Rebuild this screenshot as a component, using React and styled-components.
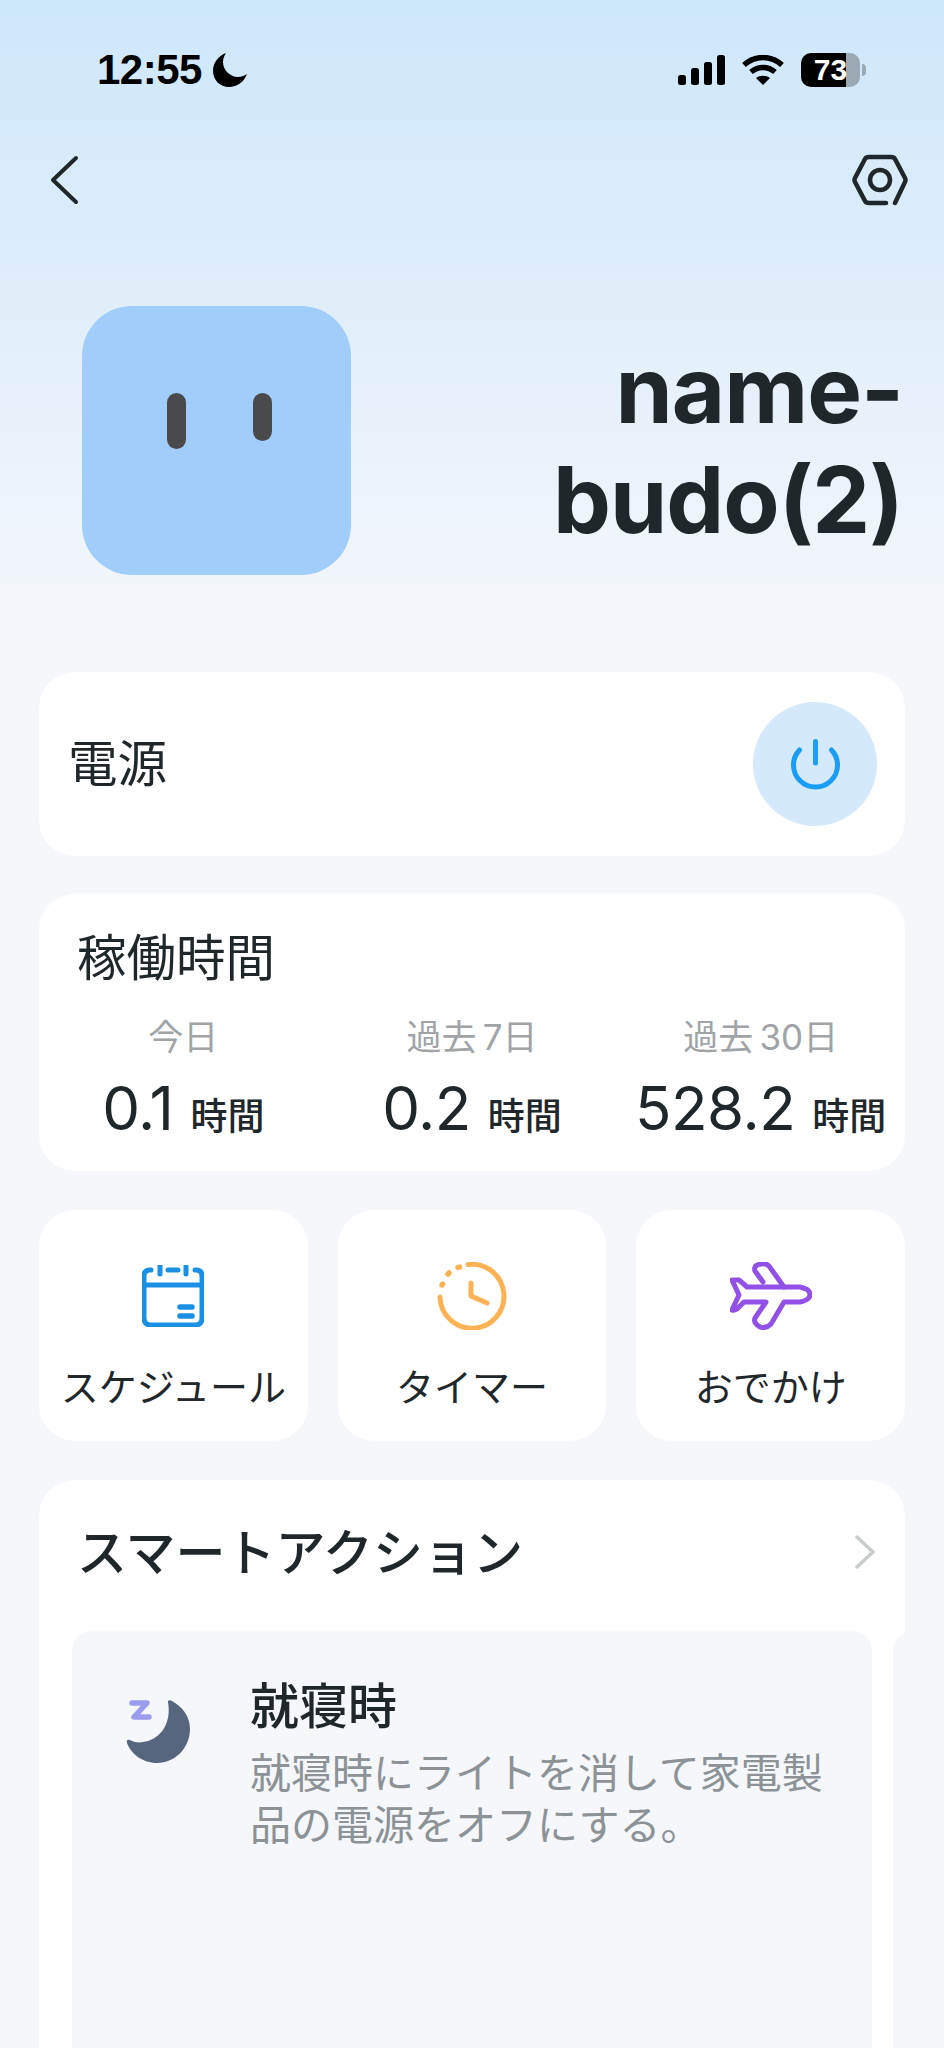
import styled, { createGlobalStyle } from "styled-components";

const GlobalStyle = createGlobalStyle`
    html, body {
        margin: 0;
        padding: 0;
        background: #f5f7fb;
    }
    * {
        box-sizing: border-box;
    }
`

const Page = styled.div`
    width: 944px;
    height: 2048px;
    overflow: hidden;
    padding: 0 39px;
    background: linear-gradient(180deg, #cde7fb 0%, #dfeefa 280px, #f5f7fb 640px);
    font-family: Inter, "Noto Sans CJK JP", sans-serif;
    color: #1f272b;
`

const StatusBar = styled.div`
    display: flex;
    align-items: center;
    justify-content: space-between;
    height: 34px;
    margin: 53px -39px 0;
    padding: 0 78px 0 97px;
`

const StatusGroup = styled.div`
    display: flex;
    align-items: center;
    gap: ${(props) => props.$gap || 0}px;
`

const Time = styled.span`
    font-family: "Liberation Sans", sans-serif;
    font-size: 42px;
    font-weight: 700;
    line-height: 34px;
    color: #000;
    letter-spacing: -0.5px;
`

const Battery = styled.div`
    position: relative;
    width: 59px;
    height: 34px;
    border-radius: 10px;
    overflow: hidden;
    background: linear-gradient(90deg, #000 0, #000 45px, #9aa9b4 45px);
    color: #fff;
    font-family: "Liberation Sans", sans-serif;
    font-size: 30px;
    font-weight: 700;
    line-height: 34px;
    text-align: center;
`

const BatteryNub = styled.div`
    width: 4px;
    height: 12px;
    margin-left: 2px;
    border-radius: 0 4px 4px 0;
    background: #9aa9b4;
`

const NavBar = styled.div`
    display: flex;
    align-items: center;
    justify-content: space-between;
    height: 52px;
    margin: 67px -3px 0 10px;
`

const Hero = styled.div`
    display: flex;
    align-items: center;
    justify-content: space-between;
    margin-top: 100px;
    padding: 0 2px 0 43px;
`

const Avatar = styled.div`
    display: flex;
    justify-content: center;
    gap: 67px;
    flex: none;
    width: 269px;
    height: 269px;
    padding: 87px 0 0 6px;
    border-radius: 50px;
    background: #a1cdfb;
`

const Eye = styled.div`
    width: 19px;
    height: ${(props) => props.$height}px;
    border-radius: 10px;
    background: #4a4a4c;
`

const DeviceName = styled.h1`
    width: 500px;
    margin: 0;
    padding-top: 8px;
    font-size: 92px;
    font-weight: 700;
    line-height: 110px;
    letter-spacing: -1px;
    text-align: right;
    color: #1f272b;
`

const Card = styled.section`
    background: #fff;
    border-radius: 36px;
`

const PowerCard = styled(Card)`
    display: flex;
    align-items: center;
    justify-content: space-between;
    height: 184px;
    margin-top: 97px;
    padding: 0 28px 0 29px;
`

const CardLabel = styled.div`
    font-size: 49.5px;
    line-height: 60px;
    font-weight: 400;
`

const PowerButton = styled.div`
    display: flex;
    align-items: center;
    justify-content: center;
    width: 124px;
    height: 124px;
    border-radius: 50%;
    background: #d5e9fd;
`

const UptimeCard = styled(Card)`
    height: 277px;
    margin-top: 38px;
    padding-top: 34px;
`

const UptimeTitle = styled(CardLabel)`
    padding-left: 38px;
`

const StatsRow = styled.div`
    display: grid;
    grid-template-columns: repeat(3, 1fr);
    margin-top: 27px;
`

const Stat = styled.div`
    display: flex;
    flex-direction: column;
    align-items: center;
`

const StatLabel = styled.div`
    font-size: 35px;
    line-height: 44px;
    color: #a0a4a7;
`

const StatValue = styled.div`
    margin-top: 14px;
    font-size: 60px;
    line-height: 70px;
    letter-spacing: -0.5px;
    white-space: nowrap;
`

const StatUnit = styled.span`
    margin-left: 17px;
    font-size: 37px;
    font-weight: 500;
    letter-spacing: 0;
`

const ActionRow = styled.div`
    display: grid;
    grid-template-columns: repeat(3, 1fr);
    gap: 30px;
    margin-top: 39px;
`

const ActionCard = styled(Card)`
    display: flex;
    flex-direction: column;
    align-items: center;
    height: 231px;
    padding-top: 52px;
`

const ActionIcon = styled.div`
    display: flex;
    align-items: center;
    justify-content: center;
    height: 68px;
`

const ActionLabel = styled.div`
    margin-top: 33px;
    font-size: 38px;
    line-height: 48px;
    white-space: nowrap;
`

const SmartCard = styled(Card)`
    height: 700px;
    margin-top: 39px;
    overflow: hidden;
    border-radius: 36px 36px 0 0;
`

const SmartHeader = styled.div`
    display: flex;
    align-items: center;
    justify-content: space-between;
    height: 151px;
    padding: 0 30px 13px 38px;
    font-size: 50px;
    font-weight: 500;
`

const ChevronSvg = styled.svg`
    margin-top: 6px;
`

const SceneRow = styled.div`
    display: flex;
    gap: 21px;
    margin-left: 33px;
`

const SceneCard = styled.div`
    display: flex;
    flex: none;
    gap: 51px;
    width: 800px;
    height: 560px;
    padding: 44px 40px 0 53px;
    border-radius: 20px;
    background: #f5f7fb;
`

const SceneIcon = styled.div`
    flex: none;
    width: 74px;
    padding-top: 24px;
`

const SceneTitle = styled.div`
    font-size: 49px;
    font-weight: 500;
    line-height: 64px;
`

const SceneText = styled.div`
    margin-top: 8px;
    font-size: 41px;
    line-height: 52px;
    color: #8c9296;
`

const BackIcon = () => (
    <svg width="30" height="50" viewBox="0 0 30 50" fill="none" stroke="#1f272b" strokeWidth="4" strokeLinecap="round" strokeLinejoin="round">
        <path d="M27 3 L4 25 L27 47" />
    </svg>
)

const GearIcon = () => (
    <svg width="56" height="52" viewBox="0 0 56 52" fill="none" stroke="#1f272b" strokeWidth="4.5" strokeLinecap="round" strokeLinejoin="round">
        <path d="M34 49 H17 Q14 49 13 47 L3 28 Q2 26 3 24 L13 5 Q14 3 17 3 H39 Q42 3 43 5 L53 24 Q54 26 53 28 L43 49" />
        <circle cx="28" cy="26" r="10" />
    </svg>
)

const PowerIcon = () => (
    <svg width="49" height="51" viewBox="0 0 49 51" fill="none" stroke="#1a9df5" strokeWidth="5" strokeLinecap="round">
        <path d="M24.5 2.5 V24" />
        <path d="M8.5 11 A22 22 0 1 0 40.5 11" />
    </svg>
)

const SignalIcon = () => (
    <svg width="47" height="30" viewBox="0 0 47 30" fill="#000">
        <rect x="0" y="20" width="8" height="10" rx="2.5" />
        <rect x="13" y="13" width="8" height="17" rx="2.5" />
        <rect x="26" y="7" width="8" height="23" rx="2.5" />
        <rect x="39" y="0" width="8" height="30" rx="2.5" />
    </svg>
)

const WifiIcon = () => (
    <svg width="42" height="30" viewBox="0 0 42 30" fill="none" stroke="#000" strokeWidth="5.5">
        <path d="M2 10 C13 0 29 0 40 10" />
        <path d="M9 17 C16 11 26 11 33 17" />
        <path d="M21 30 L14 23 C18 20 24 20 28 23 Z" fill="#000" stroke="none" />
    </svg>
)

const NightIcon = () => (
    <svg width="34" height="34" viewBox="0 0 34 34" fill="#000">
        <path d="M13 0 C5 3 0 10 0 18 C0 27 7 34 16 34 C24 34 31 29 34 21 C31 23 28 24 25 24 C17 24 10 17 10 9 C10 6 11 3 13 0 Z" />
    </svg>
)

const CalendarIcon = () => (
    <svg width="62" height="62" viewBox="0 0 62 62" fill="none" stroke="#1a8fe3" strokeWidth="5" strokeLinecap="round" strokeLinejoin="round">
        <path d="M9 5 H8 Q2 5 2 11 V53 Q2 60 9 60 H53 Q60 60 60 53 V11 Q60 5 54 5 H53" />
        <path d="M18 1 V9 M44 1 V9 M26 5 H36" />
        <path d="M2 20 H60" />
        <path d="M38 42 H50 M38 51 H50" strokeWidth="5.5" />
    </svg>
)

const ClockIcon = () => (
    <svg width="70" height="68" viewBox="0 0 70 68" fill="none" stroke="#ffb254" strokeWidth="5" strokeLinecap="round" strokeLinejoin="round">
        <path d="M31 2.5 A32 32 0 1 1 3 35" />
        <path d="M21 5.5 L22.5 5" strokeWidth="5.5" />
        <path d="M11 12 L12 11" strokeWidth="5.5" />
        <path d="M5 23 L5.5 22" strokeWidth="5.5" />
        <path d="M34 21 V34 L50 41" />
    </svg>
)

const PlaneIcon = () => (
    <svg width="82" height="68" viewBox="0 0 82 68" fill="none" stroke="#9150e6" strokeWidth="5" strokeLinecap="round" strokeLinejoin="round">
        <path d="M2 18 H9 L17 25 H70 Q80 27 80 32.5 Q80 38 70 40 H54 L41 62 Q36 67 30 65 Q23 61 25 56 L36 40 H14 L7 47 Q4 49 2 48 L9 33 Z" />
        <path d="M33 20 L25 9 Q23 3 31 2 Q36 1 39 4 L54 25" />
    </svg>
)

const MoonIcon = () => (
    <svg width="66" height="66" viewBox="0 0 66 66" fill="none">
        <path d="M43 3 C42 2 45 0.5 47 2 C58 8 65 18 65 30 C65 49 50 64 32 64 C18 64 6 55 2 44 C1 41 3 40 5 41 C9 43 13 44 18 43 C34 41 47 26 43 3 Z" fill="#57667f" />
        <path d="M7 4 H22 L9 18 H24" stroke="#9a9cf0" strokeWidth="5.5" strokeLinecap="round" strokeLinejoin="round" />
    </svg>
)

const ChevronIcon = () => (
    <ChevronSvg width="20" height="34" viewBox="0 0 20 34" fill="none" stroke="#c8cbcd" strokeWidth="3.5" strokeLinecap="round" strokeLinejoin="round">
        <path d="M2 2 L18 17 L2 32" />
    </ChevronSvg>
)

const stats = [
    { label: "今日", value: "0.1" },
    { label: "過去\u20097日", value: "0.2" },
    { label: "過去\u200930日", value: "528.2" },
]

const actions = [
    { label: "スケジュール", icon: <CalendarIcon /> },
    { label: "タイマー", icon: <ClockIcon /> },
    { label: "おでかけ", icon: <PlaneIcon /> },
]

const App = () => {
    return (
        <>
            <GlobalStyle />
            <Page>
                <StatusBar>
                    <StatusGroup $gap={11}>
                        <Time>12:55</Time>
                        <NightIcon />
                    </StatusGroup>
                    <StatusGroup $gap={17}>
                        <SignalIcon />
                        <WifiIcon />
                        <StatusGroup>
                            <Battery>73</Battery>
                            <BatteryNub />
                        </StatusGroup>
                    </StatusGroup>
                </StatusBar>
                <NavBar>
                    <BackIcon />
                    <GearIcon />
                </NavBar>
                <Hero>
                    <Avatar>
                        <Eye $height={56} />
                        <Eye $height={48} />
                    </Avatar>
                    <DeviceName>name-budo(2)</DeviceName>
                </Hero>
                <PowerCard>
                    <CardLabel>電源</CardLabel>
                    <PowerButton>
                        <PowerIcon />
                    </PowerButton>
                </PowerCard>
                <UptimeCard>
                    <UptimeTitle>稼働時間</UptimeTitle>
                    <StatsRow>
                        {stats.map((stat) => (
                            <Stat key={stat.label}>
                                <StatLabel>{stat.label}</StatLabel>
                                <StatValue>
                                    {stat.value}
                                    <StatUnit>時間</StatUnit>
                                </StatValue>
                            </Stat>
                        ))}
                    </StatsRow>
                </UptimeCard>
                <ActionRow>
                    {actions.map((action) => (
                        <ActionCard key={action.label}>
                            <ActionIcon>{action.icon}</ActionIcon>
                            <ActionLabel>{action.label}</ActionLabel>
                        </ActionCard>
                    ))}
                </ActionRow>
                <SmartCard>
                    <SmartHeader>
                        スマートアクション
                        <ChevronIcon />
                    </SmartHeader>
                    <SceneRow>
                        <SceneCard>
                            <SceneIcon>
                                <MoonIcon />
                            </SceneIcon>
                            <div>
                                <SceneTitle>就寝時</SceneTitle>
                                <SceneText>就寝時にライトを消して家電製品の電源をオフにする。</SceneText>
                            </div>
                        </SceneCard>
                        <SceneCard />
                    </SceneRow>
                </SmartCard>
            </Page>
        </>
    )
}

export default App;
